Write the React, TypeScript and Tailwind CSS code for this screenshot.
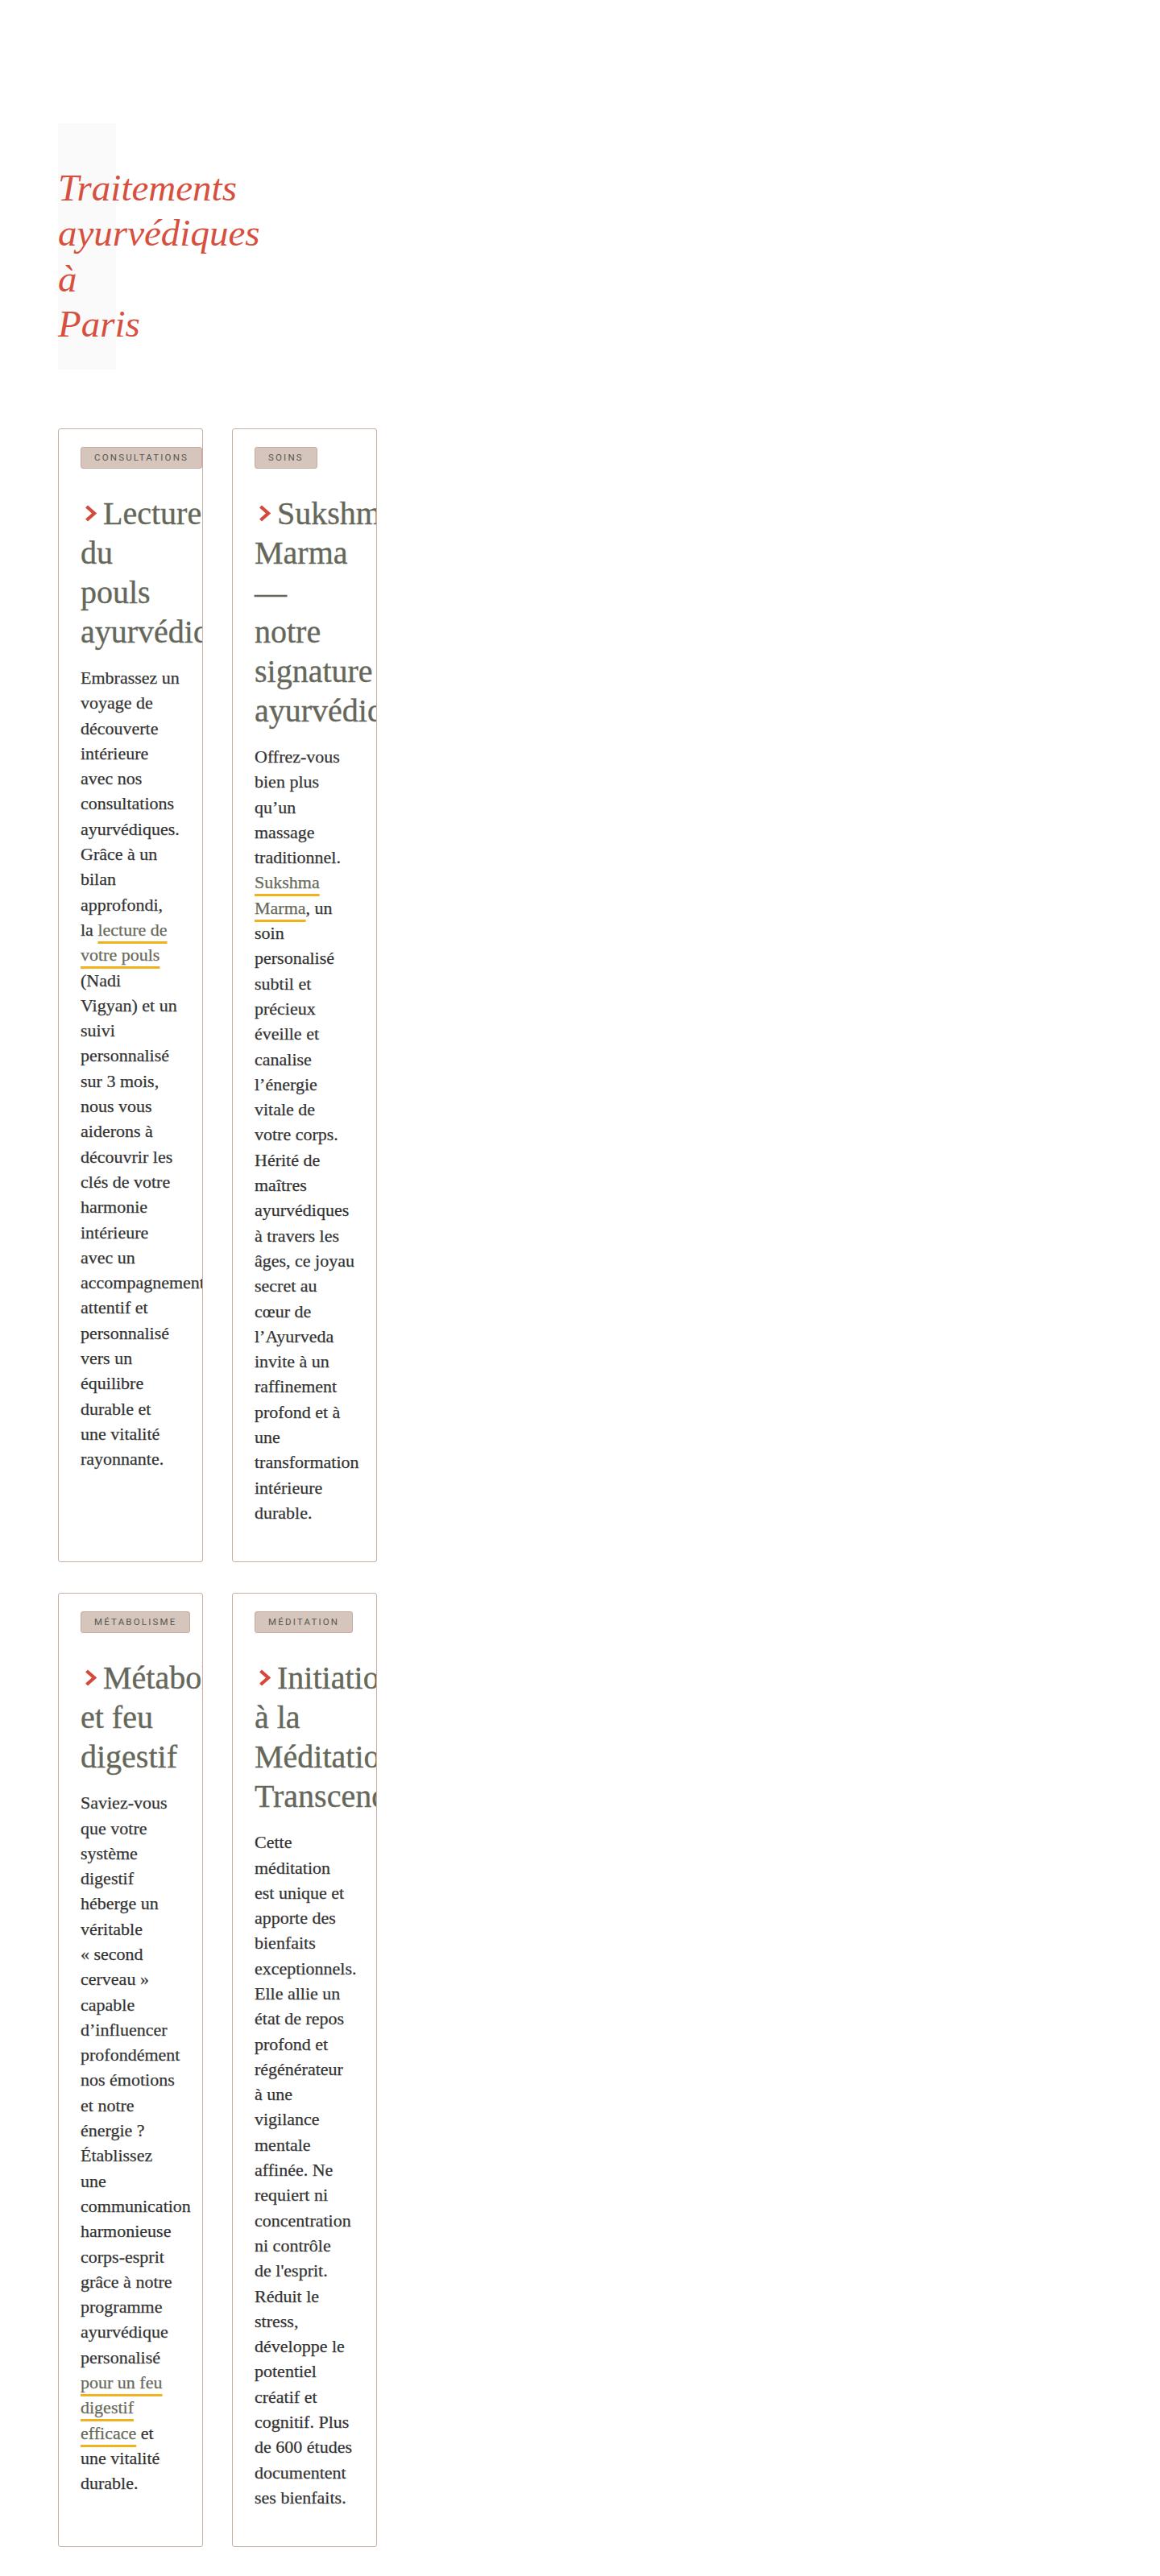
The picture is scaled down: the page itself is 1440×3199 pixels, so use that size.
import React from "react";

type Line = React.ReactNode;

function Lnk({ children }: { children: React.ReactNode }) {
  return (
    <a
      href="#"
      className="text-[#686a5b] underline decoration-[#efb11d] decoration-[3px] underline-offset-[7px]"
    >
      {children}
    </a>
  );
}

function Chevron() {
  return (
    <svg
      width="15"
      height="21"
      viewBox="0 0 15 21"
      className="ml-[5px] mr-[8px] inline-block align-[3px]"
    >
      <path d="M2.5 2 L12 10.5 L2.5 19" fill="none" stroke="#d5493b" strokeWidth="4.2" />
    </svg>
  );
}

function Lines({ lines }: { lines: Line[] }) {
  return (
    <>
      {lines.map((l, i) => (
        <React.Fragment key={i}>
          {i > 0 && <br />}
          {l}
        </React.Fragment>
      ))}
    </>
  );
}

function Card({ badge, title, body }: { badge: string; title: string[]; body: Line[] }) {
  return (
    <div className="overflow-hidden rounded-[3px] border border-[#c9aea2] bg-white pt-[22px] pr-[27px] pb-[45px] pl-[27px]">
      <span className="flex h-[27px] w-fit items-center whitespace-nowrap rounded-[3px] border border-[#c8ab9f] bg-[#d6c5bc] px-4 font-['Roboto',sans-serif] text-[11.5px] tracking-[0.19em] text-[#57584c]">
        {badge}
      </span>
      <h2 className="mt-[31px] whitespace-nowrap font-['Liberation_Serif','Times_New_Roman',serif] text-[40px] font-normal leading-[49px] text-[#65675a] [-webkit-text-stroke:0.35px_#65675a]">
        <Chevron />
        <Lines lines={title} />
      </h2>
      <p className="mt-[17px] whitespace-nowrap font-['Liberation_Serif','Times_New_Roman',serif] text-[22px] leading-[31.3px] text-[#333333] [-webkit-text-stroke:0.25px_currentColor]">
        <Lines lines={body} />
      </p>
    </div>
  );
}

export default function App() {
  return (
    <div className="min-h-[3199px] bg-white px-[72px] pt-[153px] pb-[39px]">
      <div className="h-[306px] w-[72px] bg-[#fafafa] pt-[52px]">
        <h1 className="font-['Liberation_Serif','Times_New_Roman',serif] text-[47px] font-normal italic leading-[56.4px] text-[#d7503f]">
          Traitements ayurvédiques à Paris
        </h1>
      </div>

      <div className="mt-[73px] grid grid-cols-[180px_180px] gap-x-[36px] gap-y-[38px]">
        <Card
          badge="CONSULTATIONS"
          title={["Lecture", "du", "pouls", "ayurvédique"]}
          body={[
            "Embrassez un",
            "voyage de",
            "découverte",
            "intérieure",
            "avec nos",
            "consultations",
            "ayurvédiques.",
            "Grâce à un",
            "bilan",
            "approfondi,",
            <>la <Lnk>lecture de</Lnk></>,
            <Lnk>votre pouls</Lnk>,
            "(Nadi",
            "Vigyan) et un",
            "suivi",
            "personnalisé",
            "sur 3 mois,",
            "nous vous",
            "aiderons à",
            "découvrir les",
            "clés de votre",
            "harmonie",
            "intérieure",
            "avec un",
            "accompagnement",
            "attentif et",
            "personnalisé",
            "vers un",
            "équilibre",
            "durable et",
            "une vitalité",
            "rayonnante.",
          ]}
        />
        <Card
          badge="SOINS"
          title={["Sukshma", "Marma", "—", "notre", "signature", "ayurvédique"]}
          body={[
            "Offrez-vous",
            "bien plus",
            "qu’un",
            "massage",
            "traditionnel.",
            <Lnk>Sukshma</Lnk>,
            <><Lnk>Marma</Lnk>, un</>,
            "soin",
            "personalisé",
            "subtil et",
            "précieux",
            "éveille et",
            "canalise",
            "l’énergie",
            "vitale de",
            "votre corps.",
            "Hérité de",
            "maîtres",
            "ayurvédiques",
            "à travers les",
            "âges, ce joyau",
            "secret au",
            "cœur de",
            "l’Ayurveda",
            "invite à un",
            "raffinement",
            "profond et à",
            "une",
            "transformation",
            "intérieure",
            "durable.",
          ]}
        />
        <Card
          badge="MÉTABOLISME"
          title={["Métabolisme", "et feu", "digestif"]}
          body={[
            "Saviez-vous",
            "que votre",
            "système",
            "digestif",
            "héberge un",
            "véritable",
            "« second",
            "cerveau »",
            "capable",
            "d’influencer",
            "profondément",
            "nos émotions",
            "et notre",
            "énergie ?",
            "Établissez",
            "une",
            "communication",
            "harmonieuse",
            "corps-esprit",
            "grâce à notre",
            "programme",
            "ayurvédique",
            "personalisé",
            <Lnk>pour un feu</Lnk>,
            <Lnk>digestif</Lnk>,
            <><Lnk>efficace</Lnk> et</>,
            "une vitalité",
            "durable.",
          ]}
        />
        <Card
          badge="MÉDITATION"
          title={["Initiation", "à la", "Méditation", "Transcendantale"]}
          body={[
            "Cette",
            "méditation",
            "est unique et",
            "apporte des",
            "bienfaits",
            "exceptionnels.",
            "Elle allie un",
            "état de repos",
            "profond et",
            "régénérateur",
            "à une",
            "vigilance",
            "mentale",
            "affinée. Ne",
            "requiert ni",
            "concentration",
            "ni contrôle",
            "de l'esprit.",
            "Réduit le",
            "stress,",
            "développe le",
            "potentiel",
            "créatif et",
            "cognitif. Plus",
            "de 600 études",
            "documentent",
            "ses bienfaits.",
          ]}
        />
      </div>
    </div>
  );
}
